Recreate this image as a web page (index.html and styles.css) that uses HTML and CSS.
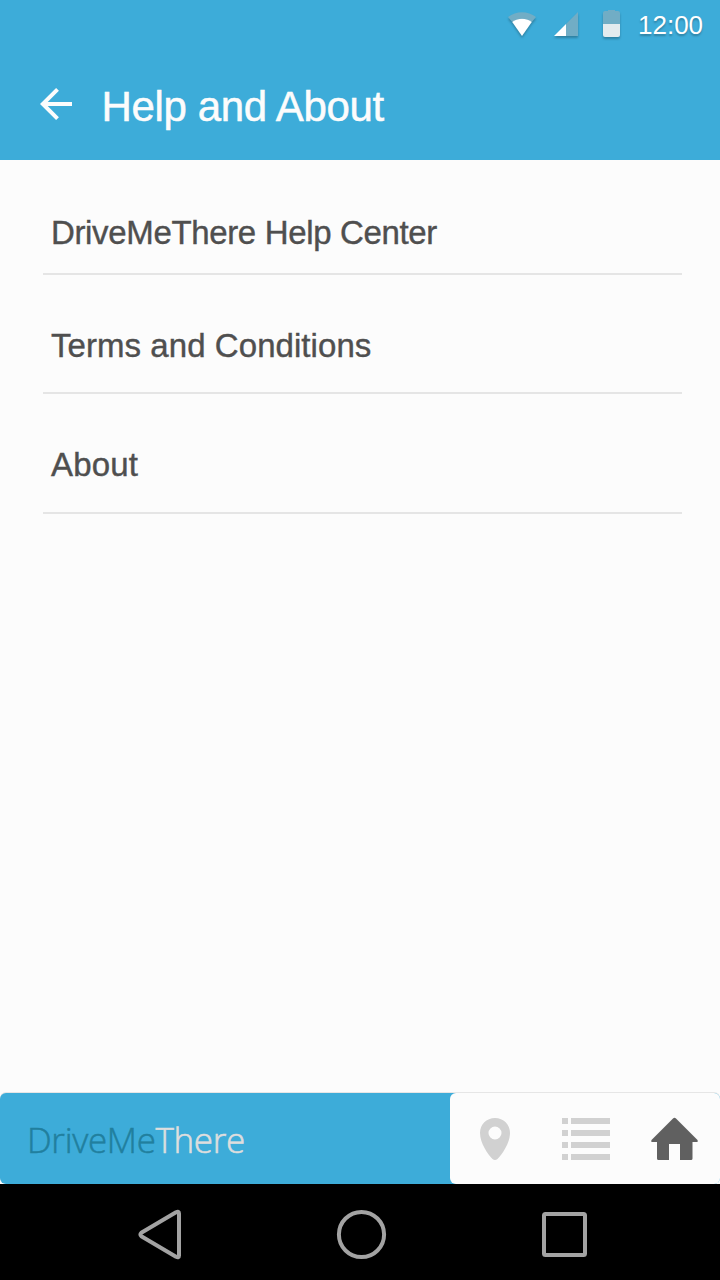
FILE: index.html
```html
<!DOCTYPE html>
<html lang="en">
<head>
<meta charset="utf-8">
<title>Help and About</title>
<link rel="stylesheet" href="styles.css">
</head>
<body>
<div class="screen">
  <header class="header">
    <div class="status">
      <svg class="status-icons" width="140" height="48" viewBox="500 0 140 48">
        <path class="dim" d="M508 17C516 10.700 528 10.700 536 17L531.800 22C526 17.600 518 17.600 512.200 22Z"/>
        <path class="lit" d="M512.200 22C518 17.600 526 17.600 531.800 22L522 36Z"/>
        <path class="dim" d="M578 12V36H566V24Z"/>
        <path class="lit" d="M566 24V36H554Z"/>
        <path class="dim" d="M603 24V13Q603 11 605 11H608V10H615V11H618Q620 11 620 13V24Z"/>
        <path class="charge" d="M603 24H620V35Q620 37 618 37H605Q603 37 603 35Z"/>
      </svg>
      <time class="clock">12:00</time>
    </div>
    <div class="toolbar">
      <svg class="back" width="32" height="32" viewBox="0 0 32 32">
        <path d="M17.500 1.400L2.800 16L17.500 30.600M3 16H32"/>
      </svg>
      <h1 class="title">Help and About</h1>
    </div>
  </header>
  <main class="list">
    <a class="item item-help">DriveMeThere Help Center</a>
    <a class="item item-terms">Terms and Conditions</a>
    <a class="item item-about">About</a>
  </main>
  <footer class="dock">
    <div class="brand"><span class="brand-drive">DriveMe</span><span class="brand-there">There</span></div>
    <nav class="tabs">
      <svg width="270" height="91" viewBox="450 1093 270 91">
        <path class="muted" fill-rule="evenodd" d="M495 1118C486.500 1118 480 1124.600 480 1133C480 1143 488 1154.500 492.500 1159Q495 1161 497.500 1159C502 1154.500 510 1143 510 1133C510 1124.600 503.500 1118 495 1118ZM495 1126.500A6.500 6.500 0 1 1 495 1139.500A6.500 6.500 0 1 1 495 1126.500Z"/>
        <path class="muted" d="M562 1118h6v6h-6zM571 1118h39v6h-39zM562 1130h6v6h-6zM571 1130h39v6h-39zM562 1142h6v6h-6zM571 1142h39v6h-39zM562 1154h6v6h-6zM571 1154h39v6h-39z"/>
        <path class="active" d="M673 1118.500Q674.500 1117.200 676 1118.500L697.500 1140Q698.500 1142 697 1142H692.500V1158.500Q692.500 1160 691 1160H680V1144H669V1160H658.500Q657 1160 657 1158.500V1142H652Q650.500 1142 651.500 1140Z"/>
      </svg>
    </nav>
  </footer>
  <div class="system">
    <svg width="720" height="96" viewBox="0 1184 720 96">
      <path d="M141.300 1232.800L176 1212.200Q179 1210.800 179 1213.500V1255.500Q179 1258.200 176 1256.800L141.300 1236.200Q139.700 1234.500 141.300 1232.800Z"/>
      <circle cx="361.500" cy="1234.500" r="22.600"/>
      <rect x="544" y="1214" width="41" height="41" rx="1.500"/>
    </svg>
  </div>
</div>
</body>
</html>
```
FILE: styles.css
```css
body { margin: 0; }
.screen {
  width: 720px;
  height: 1280px;
  display: flex;
  flex-direction: column;
  overflow: hidden;
  background: #fcfcfc;
  font-family: "Liberation Sans", Arial, sans-serif;
}
.header { height: 160px; background: #3dacd9; color: #fcfcfc; }
.status {
  height: 48px;
  display: flex;
  justify-content: flex-end;
  padding-right: 16px;
}
.status-icons { margin-right: 1px; filter: drop-shadow(0 2px 1px rgba(0, 0, 0, .25)); }
.dim { fill: #71adc5; }
.lit { fill: #fff; }
.charge { fill: #e4ebee; }
.clock {
  width: 66px;
  margin-left: -3px;
  font-size: 26px;
  line-height: 50px;
  color: #fff;
  text-shadow: 0 2px 2px rgba(0, 0, 0, .25);
}
.toolbar { height: 112px; display: flex; padding-left: 40px; }
.back { margin-top: 40px; fill: none; stroke: #fcfcfc; stroke-width: 4; }
.title {
  margin: 35px 0 0 29.500px;
  font-size: 42px;
  line-height: 48px;
  font-weight: 400;
  letter-spacing: -.35px;
  -webkit-text-stroke: .5px #fcfcfc;
}
.list { flex: 1; padding: 0 38px 0 43px; }
.item {
  display: block;
  height: 118px;
  box-sizing: border-box;
  padding: 51px 0 0 8px;
  border-bottom: 2px solid #e5e5e5;
  color: #4f4f4f;
  font-size: 33px;
  line-height: 40px;
  -webkit-text-stroke: .4px #4f4f4f;
}
.item-help { height: 115px; padding-top: 53px; letter-spacing: -.35px; }
.item-terms { height: 119px; letter-spacing: .06px; }
.item-about { height: 120px; letter-spacing: .15px; }
.dock {
  height: 91px;
  display: flex;
  border-radius: 6px;
  background: #3dacd9;
  box-shadow: 0 -1px 0 #e6e6e6;
}
.brand {
  flex: 1;
  padding-left: 27px;
  font-family: "Open Sans", sans-serif;
  font-weight: 300;
  font-size: 35px;
  line-height: 94px;
  letter-spacing: -.35px;
}
.brand-drive { color: #217f9e; -webkit-text-stroke: .5px #217f9e; }
.brand-there { color: #dedede; -webkit-text-stroke: .6px #dedede; }
.tabs { width: 270px; border-radius: 6px; background: #fcfcfc; overflow: hidden; }
.tabs svg, .system svg { display: block; }
.muted { fill: #d1d1d1; }
.active { fill: #606060; }
.system { height: 96px; background: #000; }
.system svg { fill: none; stroke: #a3a3a3; stroke-width: 4; stroke-linejoin: round; }
```
